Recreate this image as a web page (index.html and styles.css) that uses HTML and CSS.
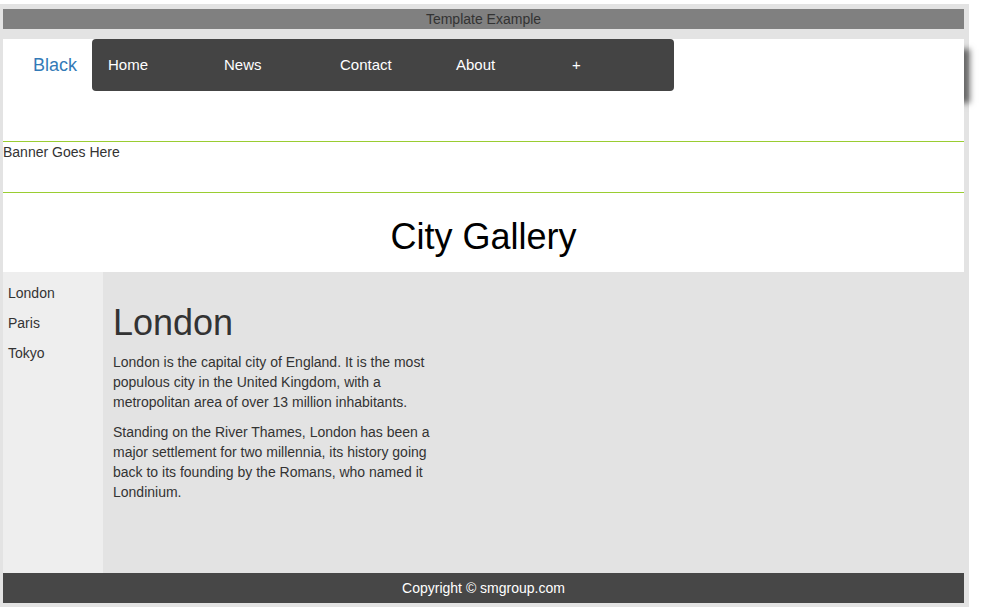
FILE: index.html
```html
<!DOCTYPE html>
<html lang="en">
<head>
<meta charset="utf-8">
<title>City Gallery</title>
<link rel="stylesheet" href="styles.css">
</head>
<body>
<div class="page">
  <div class="topbar">Template Example</div>
  <div class="shadow-box"></div>
  <div class="header">
    <a class="brand" href="#">Black</a>
    <ul class="nav">
      <li><a href="#">Home</a></li>
      <li><a href="#">News</a></li>
      <li><a href="#">Contact</a></li>
      <li><a href="#">About</a></li>
      <li><a href="#">+</a></li>
    </ul>
  </div>
  <div class="banner">Banner Goes Here</div>
  <h2 class="title">City Gallery</h2>
  <div class="main">
    <ul class="sidebar">
      <li><a href="#">London</a></li>
      <li><a href="#">Paris</a></li>
      <li><a href="#">Tokyo</a></li>
    </ul>
    <div class="content">
      <h1>London</h1>
      <p>London is the capital city of England. It is the most populous city in the United Kingdom, with a metropolitan area of over 13 million inhabitants.</p>
      <p>Standing on the River Thames, London has been a major settlement for two millennia, its history going back to its founding by the Romans, who named it Londinium.</p>
    </div>
  </div>
  <div class="footer">Copyright © smgroup.com</div>
</div>
</body>
</html>
```

FILE: styles.css
```css
html, body {
  margin: 0;
  padding: 0;
  background: #fff;
}
body {
  padding-top: 4px;
  font-family: "Liberation Sans", Arial, Helvetica, sans-serif;
  font-size: 14px;
  line-height: 20px;
  color: #333;
}
.page {
  position: relative;
  width: 969px;
  box-sizing: border-box;
  background: #e3e3e3;
  padding: 5px 5px 4px 3px;
}
.topbar {
  height: 20px;
  line-height: 20px;
  background: #808080;
  color: #333;
  text-align: center;
  margin-bottom: 10px;
}
.shadow-box {
  position: absolute;
  top: 39px;
  right: 5px;
  width: 80px;
  height: 54px;
  box-shadow: 6px 6px 6px rgba(0, 0, 0, 0.55);
}
.header {
  position: relative;
  display: flex;
  align-items: flex-start;
  height: 102px;
  background: #fff;
}
.brand {
  display: block;
  width: 59px;
  padding-left: 30px;
  height: 52px;
  line-height: 52px;
  font-size: 18px;
  color: #337ab7;
  text-decoration: none;
}
.nav {
  display: flex;
  margin: 0;
  padding: 0 2px 0 0;
  list-style: none;
  background: #444;
  border-radius: 4px;
  height: 52px;
}
.nav li {
  width: 116px;
}
.nav a {
  display: block;
  padding-left: 16px;
  line-height: 51px;
  font-size: 15px;
  color: #fff;
  text-decoration: none;
}
.banner {
  position: relative;
  background: #fff;
  height: 50px;
  border-top: 1px solid #9acd32;
  border-bottom: 1px solid #9acd32;
  line-height: 20px;
}
.title {
  position: relative;
  margin: 0;
  padding: 24px 0 15px;
  background: #fff;
  text-align: center;
  font-size: 36px;
  font-weight: normal;
  line-height: 39.6px;
  color: #000;
}
.main {
  display: flex;
  height: 301px;
  background: #e3e3e3;
}
.sidebar {
  width: 100px;
  box-sizing: border-box;
  margin: 0;
  padding: 6px 0 0 5px;
  list-style: none;
  background: #eee;
}
.sidebar a {
  display: block;
  padding: 5px 0;
  color: #333;
  text-decoration: none;
}
.content {
  padding: 11px 0 0 10px;
  width: 340px;
}
.content h1 {
  margin: 20px 0 10px;
  font-size: 36px;
  font-weight: 500;
  line-height: 39.6px;
  color: #333;
}
.content p {
  margin: 0 0 10px;
}
.footer {
  height: 30px;
  line-height: 30px;
  background: #474747;
  color: #fff;
  text-align: center;
}
```
